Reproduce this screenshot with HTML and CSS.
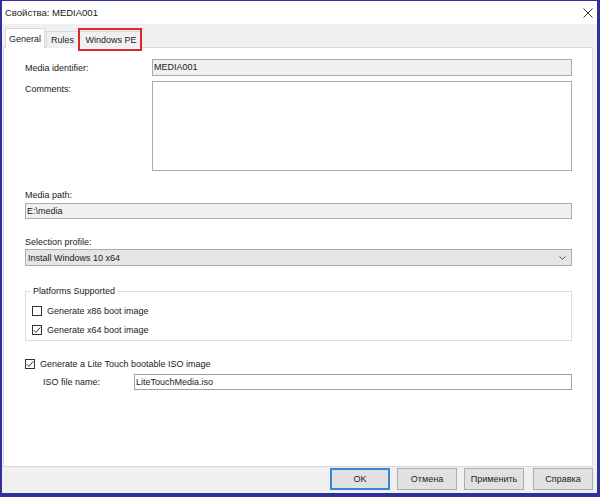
FILE: index.html
```html
<!DOCTYPE html>
<html>
<head>
<meta charset="utf-8">
<link rel="stylesheet" href="styles.css">
</head>
<body>
<div class="window">
  <div class="titlebar">
    <span class="title">Свойства: MEDIA001</span>
    <svg class="close" width="10" height="10" viewBox="0 0 10 10"><path d="M0.5 0.5 L9.5 9.5 M9.5 0.5 L0.5 9.5" stroke="#333" stroke-width="1" fill="none"/></svg>
  </div>
  <div class="body">
    <div class="tabs">
      <div class="tab active">General</div>
      <div class="tab rules">Rules</div>
      <div class="tab marked">Windows PE</div>
    </div>
    <div class="panel">
      <div class="row id-row">
        <span class="label">Media identifier:</span>
        <div class="field ro">MEDIA001</div>
      </div>
      <div class="row comments-row">
        <span class="label">Comments:</span>
        <div class="field area"></div>
      </div>
      <div class="stack-label path-label">Media path:</div>
      <div class="field ro path-field">E:\media</div>
      <div class="stack-label profile-label">Selection profile:</div>
      <div class="combo">
        <span>Install Windows 10 x64</span>
        <svg class="chev" width="7" height="4" viewBox="0 0 7 4"><path d="M0.5 0.5 L3.5 3.3 L6.5 0.5" stroke="#555" stroke-width="1" fill="none"/></svg>
      </div>
      <fieldset class="group">
        <legend>Platforms Supported</legend>
        <div class="check"><span class="box"></span>Generate x86 boot image</div>
        <div class="check"><span class="box"><svg width="8" height="8" viewBox="0 0 8 8"><path d="M0.8 4.2 L3 6.4 L7.3 1.4" stroke="#333" stroke-width="1" fill="none"/></svg></span>Generate x64 boot image</div>
      </fieldset>
      <div class="check lite"><span class="box"><svg width="8" height="8" viewBox="0 0 8 8"><path d="M0.8 4.2 L3 6.4 L7.3 1.4" stroke="#333" stroke-width="1" fill="none"/></svg></span>Generate a Lite Touch bootable ISO image</div>
      <div class="row iso-row">
        <span class="label">ISO file name:</span>
        <div class="field iso-field">LiteTouchMedia.iso</div>
      </div>
    </div>
    <div class="buttons">
      <div class="btn default">OK</div>
      <div class="btn">Отмена</div>
      <div class="btn">Применить</div>
      <div class="btn help">Справка</div>
    </div>
  </div>
</div>
</body>
</html>
```

FILE: styles.css
```css
* { box-sizing: border-box; }
html, body { margin: 0; padding: 0; background: #fff; }
body {
  font-family: "Liberation Sans", Arial, sans-serif;
  font-size: 9px;
  color: #222;
}
.window {
  width: 600px;
  height: 497px;
  border-style: solid;
  border-color: #2f309c;
  border-width: 1px 3px 4px 2px;
  display: flex;
  flex-direction: column;
  background: #f0f0f0;
}
.titlebar {
  height: 23px;
  flex: none;
  background: #fff;
  display: flex;
  align-items: center;
  justify-content: space-between;
  padding: 0 4px 0 3px;
}
.title { font-size: 9.5px; color: #222; }
.close { display: block; }
.body {
  flex: 1;
  display: flex;
  flex-direction: column;
  padding: 0 4px 0 1px;
}
.tabs {
  height: 23px;
  flex: none;
  display: flex;
  align-items: flex-end;
  padding-left: 2px;
  position: relative;
  z-index: 1;
}
.tab {
  height: 17px;
  border: 1px solid #d9d9d9;
  border-bottom: none;
  background: #f0f0f0;
  display: flex;
  align-items: center;
  justify-content: center;
  margin-bottom: -1px;
}
.tab.active {
  width: 40px;
  height: 20px;
  background: #fff;
  margin-right: 1px;
  padding-top: 1px;
}
.tab.rules { width: 33px; }
.tab.marked {
  width: 64px;
  margin-left: -1px;
  position: relative;
  padding-left: 2px;
}
.tab.marked::after {
  content: "";
  position: absolute;
  left: -1px;
  right: -1px;
  top: -4px;
  bottom: -3px;
  border: 2px solid #e0262b;
}
.panel {
  height: 420px;
  flex: none;
  background: #fff;
  border: 1px solid #d9d9d9;
  padding: 0 20px 0 21px;
}
.row {
  display: grid;
  grid-template-columns: 127px 1fr;
  align-items: center;
}
.id-row { margin-top: 11px; }
.comments-row { margin-top: 5px; align-items: start; }
.comments-row .label { padding-top: 2px; }
.label { line-height: 12px; }
.field {
  height: 17px;
  border: 1px solid #acacac;
  background: #fff;
  padding-left: 1px;
  line-height: 15px;
  white-space: nowrap;
}
.field.ro { background: #f0f0f0; }
.field.area { height: 90px; }
.stack-label { line-height: 12px; }
.path-label { margin-top: 18px; }
.path-field { margin-top: 2px; height: 16px; line-height: 14px; }
.profile-label { margin-top: 17px; }
.combo {
  margin-top: 1px;
  height: 17px;
  border: 1px solid #acacac;
  background: #e5e5e5;
  display: flex;
  align-items: center;
  justify-content: space-between;
  padding: 0 5px 0 2px;
}
.chev { display: block; }
.group {
  margin: 19px 0 0 0;
  padding: 4px 5px 1px 5px;
  border: 1px solid #dcdcdc;
  min-width: 0;
}
.group legend {
  padding: 0 2px;
  line-height: 12px;
}
.check {
  height: 19px;
  display: flex;
  align-items: center;
  white-space: nowrap;
}
.box {
  width: 10px;
  height: 10px;
  border: 1px solid #333;
  background: #fff;
  margin: 0 5px 0 1px;
  display: flex;
  align-items: center;
  justify-content: center;
  flex: none;
}
.box svg { display: block; }
.check.lite { margin-top: 16px; height: 14px; }
.check.lite .box { margin-left: 0; }
.iso-row { margin-top: 3px; grid-template-columns: 109px 1fr; }
.iso-row .label { padding-left: 18px; }
.iso-field { height: 16px; line-height: 14px; border-color: #a0a0a0; }
.buttons {
  flex: 1;
  display: flex;
  justify-content: flex-end;
  align-items: flex-start;
  padding-top: 1px;
  gap: 7px;
}
.btn {
  width: 60px;
  height: 22px;
  border: 1px solid #adadad;
  background: #e1e1e1;
  display: flex;
  align-items: center;
  justify-content: center;
}
.btn.default { border: 2px solid #3a86d6; }
.btn.help { margin-left: 2px; }
```
